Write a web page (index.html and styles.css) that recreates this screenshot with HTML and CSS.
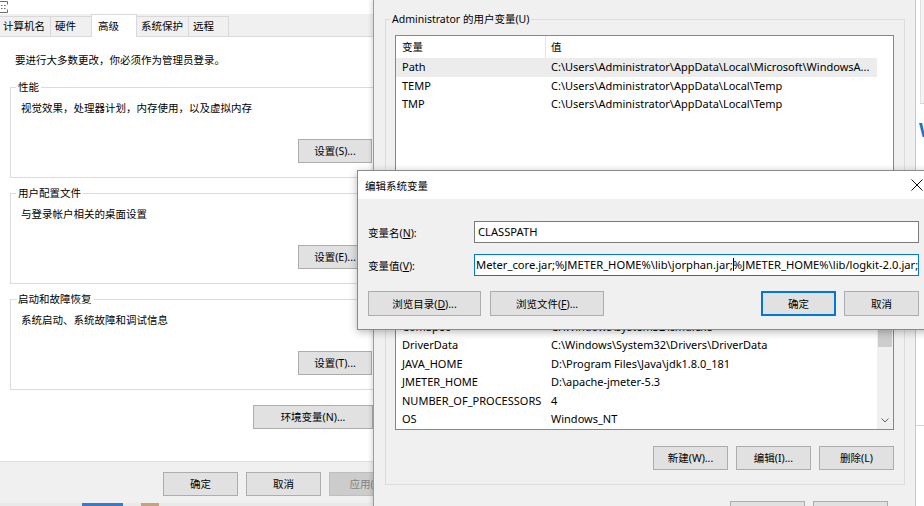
FILE: index.html
```html
<!DOCTYPE html>
<html lang="zh-CN">
<head>
<meta charset="utf-8">
<title>系统属性 - 环境变量</title>
<link rel="stylesheet" href="styles.css">
</head>
<body>
<div class="desk">

  <section class="win sysprops">
    <div class="sheet">
      <div class="caption">
        <svg class="appicon" width="10" height="14" viewBox="0 0 10 14"><path d="M0 1.5h7.5v3M0 12.5h7.5v-3M1 5.5h1.5M4 5.5h1.5M1 8.5h1.5M4 8.5h1.5" fill="none" stroke="#6b6b6b" stroke-width="1"/></svg>
      </div>
      <div class="tabs">
        <div class="tab t1">计算机名</div>
        <div class="tab t2">硬件</div>
        <div class="tab t3 sel">高级</div>
        <div class="tab t4">系统保护</div>
        <div class="tab t5">远程</div>
      </div>
      <div class="page">
        <p class="note">要进行大多数更改，你必须作为管理员登录。</p>
        <fieldset class="grp">
          <legend>性能</legend>
          <p class="desc">视觉效果，处理器计划，内存使用，以及虚拟内存</p>
          <div class="btnrow"><button class="btn">设置(S)...</button></div>
        </fieldset>
        <fieldset class="grp">
          <legend>用户配置文件</legend>
          <p class="desc">与登录帐户相关的桌面设置</p>
          <div class="btnrow"><button class="btn">设置(E)...</button></div>
        </fieldset>
        <fieldset class="grp">
          <legend>启动和故障恢复</legend>
          <p class="desc">系统启动、系统故障和调试信息</p>
          <div class="btnrow"><button class="btn">设置(T)...</button></div>
        </fieldset>
        <div class="envrow"><button class="btn wide">环境变量(N)...</button></div>
      </div>
      <div class="footer">
        <button class="btn">确定</button>
        <button class="btn">取消</button>
        <button class="btn" disabled>应用(A)</button>
      </div>
      <div class="peek"><span class="pk-blue"></span><span class="pk-orange"></span></div>
    </div>
  </section>

  <section class="win envwin">
    <fieldset class="egrp ug">
      <legend>Administrator 的用户变量(U)</legend>
      <div class="lv user">
        <div class="lvmain">
          <div class="lvh"><div class="c1">变量</div><div class="c2">值</div></div>
          <div class="lr sel"><div class="c1">Path</div><div class="c2">C:\Users\Administrator\AppData\Local\Microsoft\WindowsA...</div></div>
          <div class="lr"><div class="c1">TEMP</div><div class="c2">C:\Users\Administrator\AppData\Local\Temp</div></div>
          <div class="lr"><div class="c1">TMP</div><div class="c2">C:\Users\Administrator\AppData\Local\Temp</div></div>
        </div>
      </div>
      <div class="ebtnrow">
        <button class="btn">新建(N)...</button>
        <button class="btn">编辑(E)...</button>
        <button class="btn">删除(D)</button>
      </div>
    </fieldset>
    <fieldset class="egrp sg">
      <legend>系统变量(S)</legend>
      <div class="lv sys">
        <div class="lvmain">
          <div class="lvh"><div class="c1">变量</div><div class="c2">值</div></div>
          <div class="lr"><div class="c1">CLASSPATH</div><div class="c2">.;%JAVA_HOME%\lib\dt.jar;%JAVA_HOME%\lib\tools.jar;</div></div>
          <div class="lr"><div class="c1">ComSpec</div><div class="c2">C:\Windows\system32\cmd.exe</div></div>
          <div class="lr"><div class="c1">DriverData</div><div class="c2">C:\Windows\System32\Drivers\DriverData</div></div>
          <div class="lr"><div class="c1">JAVA_HOME</div><div class="c2">D:\Program Files\Java\jdk1.8.0_181</div></div>
          <div class="lr"><div class="c1">JMETER_HOME</div><div class="c2">D:\apache-jmeter-5.3</div></div>
          <div class="lr"><div class="c1">NUMBER_OF_PROCESSORS</div><div class="c2">4</div></div>
          <div class="lr"><div class="c1">OS</div><div class="c2">Windows_NT</div></div>
        </div>
        <div class="vscroll">
          <div class="sbup"></div>
          <div class="sbtrack"><div class="thumb"></div></div>
          <div class="sbdown"><svg width="8" height="5" viewBox="0 0 8 5"><path d="M0.5 0.5L4 4L7.5 0.5" fill="none" stroke="#606060" stroke-width="1"/></svg></div>
        </div>
      </div>
      <div class="ebtnrow">
        <button class="btn">新建(W)...</button>
        <button class="btn">编辑(I)...</button>
        <button class="btn">删除(L)</button>
      </div>
    </fieldset>
    <div class="ebottom">
      <button class="btn">确定</button>
      <button class="btn">取消</button>
    </div>
  </section>

  <section class="win sliver">
    <div class="sl-top"></div>
    <div class="sl-mark">W</div>
    <div class="sl-mid"></div>
  </section>

  <section class="win editdlg">
    <div class="dlgtitle">
      <span class="dlgname">编辑系统变量</span>
      <span class="close"><svg width="12" height="12" viewBox="0 0 12 12"><path d="M0.5 0.5L11.5 11.5M11.5 0.5L0.5 11.5" stroke="#111" stroke-width="1"/></svg></span>
    </div>
    <div class="dlgbody">
      <div class="frow">
        <label class="flabel">变量名(<u>N</u>):</label>
        <div class="field">CLASSPATH</div>
      </div>
      <div class="frow">
        <label class="flabel">变量值(<u>V</u>):</label>
        <div class="field focus">Meter_core.jar;%JMETER_HOME%\lib\jorphan.jar;<span class="caret"></span>%JMETER_HOME%\lib/logkit-2.0.jar;</div>
      </div>
      <div class="dbtnrow">
        <button class="btn b1">浏览目录(<u>D</u>)...</button>
        <button class="btn b2">浏览文件(<u>F</u>)...</button>
        <button class="btn def">确定</button>
        <button class="btn">取消</button>
      </div>
    </div>
  </section>

</div>
</body>
</html>
```

FILE: styles.css
```css
* { box-sizing: border-box; }
html, body { margin: 0; padding: 0; }
body {
  font-family: "Noto Sans", "Noto Sans CJK SC", sans-serif;
  font-size: 10.5px;
  color: #000;
  background: #f0f0f0;
}
.desk {
  position: relative;
  width: 924px;
  height: 506px;
  overflow: hidden;
  background: #f0f0f0;
}
.win { position: absolute; }

/* ---------- buttons ---------- */
.btn {
  font: inherit;
  color: #000;
  height: 24px;
  width: 74px;
  padding: 0;
  border: 1px solid #adadad;
  background: #e1e1e1;
  line-height: 22px;
  text-align: center;
  white-space: nowrap;
}
.btn:disabled {
  background: #cccccc;
  border-color: #bfbfbf;
  color: #838383;
}
.btn u { text-decoration: underline; }

/* ---------- system properties window ---------- */
.sysprops {
  left: 0;
  top: 0;
  width: 373px;
  height: 506px;
  overflow: hidden;
  background: #f0f0f0;
}
.sheet {
  width: 414px;
  height: 506px;
  display: flex;
  flex-direction: column;
}
.caption {
  height: 14px;
  flex: none;
  background: #fff;
  display: flex;
}
.appicon { display: block; }
.tabs {
  flex: none;
  height: 23px;
  display: flex;
  align-items: flex-end;
  background: #f0f0f0;
  border-bottom: 1px solid #d9d9d9;
}
.tab {
  height: 20px;
  line-height: 19px;
  border: 1px solid #d9d9d9;
  border-bottom: none;
  background: #f0f0f0;
  padding-left: 4px;
  margin-left: -1px;
  white-space: nowrap;
}
.t1 { margin-left: -2px; width: 53px; }
.t2 { width: 42px; }
.t3 { width: 46px; padding-left: 6px; }
.t4 { width: 53px; }
.t5 { width: 41px; }
.tab.sel {
  height: 23px;
  padding-top: 2px;
  background: #fff;
  margin-bottom: -1px;
  position: relative;
  z-index: 1;
}
.page {
  flex: 1;
  background: #fff;
  padding: 16px 0 0 10px;
}
.note {
  margin: 0 0 0 5px;
  line-height: 14px;
  height: 14px;
}
.grp {
  width: 372px;
  margin: 13px 0 0 0;
  border: 1px solid #dcdcdc;
  padding: 7px 9px 14px 10px;
  min-width: 0;
}
.grp + .grp { margin-top: 8px; }
.grp legend {
  padding: 0 2px;
  margin-left: -5px;
  line-height: 14px;
}
.desc {
  margin: 0;
  line-height: 14px;
}
.btnrow {
  display: flex;
  justify-content: flex-end;
  margin-top: 24px;
}
.envrow {
  width: 363px;
  display: flex;
  justify-content: flex-end;
  margin-top: 15px;
}
.btn.wide { width: 120px; }
.footer {
  flex: none;
  height: 42px;
  border-top: 1px solid #dfdfdf;
  background: #f0f0f0;
  display: flex;
  justify-content: flex-end;
  align-items: flex-start;
  gap: 8px;
  padding: 10px 10px 0 0;
}
.footer .btn { width: 75px; }
.peek {
  flex: none;
  height: 3px;
  background: #e9e9e9;
  display: flex;
}
.pk-blue { width: 41px; margin-left: 82px; background: #3a78c8; }
.pk-orange { width: 18px; margin-left: 18px; background: #c9a27a; }

/* ---------- environment variables window ---------- */
.envwin {
  left: 373px;
  top: 0;
  width: 543px;
  height: 506px;
  background: #f0f0f0;
  border-left: 1px solid #9c9c9c;
  border-right: 1px solid #c8c8c8;
  box-shadow: -2px 0 4px rgba(0, 0, 0, 0.12);
  padding: 12px 0 0 11px;
}
.egrp {
  width: 520px;
  margin: 0;
  border: 1px solid #dcdcdc;
  padding: 9px 10px 14px 9px;
  min-width: 0;
}
.egrp legend {
  padding: 0 2px;
  margin-left: -5px;
  line-height: 14px;
}
.egrp.sg { margin-top: 3px; }
.lv {
  border: 1px solid #828790;
  background: #fff;
  display: flex;
  overflow: hidden;
}
.lv.user { height: 160px; }
.lv.sys { height: 153.5px; }
.lvmain { flex: 1; min-width: 0; }
.lvh {
  display: flex;
  height: 22px;
  line-height: 22px;
  width: 481px;
}
.lvh .c2 { border-left: 1px solid #e5e5e5; }
.lr {
  display: flex;
  height: 18.5px;
  line-height: 18.5px;
  width: 481px;
  font-size: 11px;
}
.lr.sel { background: #ececec; }
.c1 {
  width: 149px;
  flex: none;
  padding-left: 6px;
  white-space: nowrap;
  overflow: hidden;
}
.c2 {
  flex: 1;
  padding-left: 6px;
  white-space: nowrap;
  overflow: hidden;
}
.lvh .c2 { padding-left: 5px; }
.vscroll {
  width: 16px;
  flex: none;
  background: #f0f0f0;
  display: flex;
  flex-direction: column;
}
.sbup { height: 17px; flex: none; }
.sbtrack { flex: 1; padding: 0 1px; }
.thumb {
  margin-top: 36px;
  height: 17px;
  background: #cdcdcd;
}
.sbdown {
  height: 17px;
  flex: none;
  display: flex;
  align-items: center;
  justify-content: center;
}
.sbdown svg { display: block; }
.ebtnrow {
  display: flex;
  justify-content: flex-end;
  gap: 8px;
  margin-top: 16px;
}
.ebtnrow .btn { width: 75px; }
.ebottom {
  width: 520px;
  display: flex;
  justify-content: flex-end;
  gap: 8px;
  padding-right: 17px;
  margin-top: 16px;
}
.ebottom .btn { width: 75px; }

/* ---------- sliver of a window at the right ---------- */
.sliver {
  left: 916px;
  top: 0;
  width: 8px;
  height: 506px;
  background: #fff;
  display: flex;
  flex-direction: column;
}
.sl-top {
  height: 104px;
  flex: none;
  background: #f3f3f3;
  border-left: 1px solid #e0e0e0;
  border-bottom: 1px solid #d4d4d4;
  margin-left: 4px;
}
.sl-mark {
  margin-top: 16px;
  padding-left: 3px;
  font-family: "Liberation Sans", sans-serif;
  font-weight: bold;
  font-size: 20px;
  line-height: 20px;
  color: #1f6fc5;
  white-space: nowrap;
}
.sl-mid {
  margin-top: 285px;
  height: 1px;
  background: #d4d4d4;
}

/* ---------- edit system variable dialog ---------- */
.editdlg {
  left: 357px;
  top: 170px;
  width: 583px;
  height: 160px;
  border: 1px solid #8a8a8a;
  background: #f0f0f0;
  box-shadow: 0 2px 8px rgba(0, 0, 0, 0.28);
  display: flex;
  flex-direction: column;
}
.dlgtitle {
  height: 28px;
  flex: none;
  background: #fff;
  display: flex;
  align-items: center;
  padding-left: 7px;
}
.dlgname { flex: 1; }
.close {
  width: 44px;
  height: 28px;
  display: flex;
  align-items: center;
  justify-content: center;
}
.close svg { display: block; }
.dlgbody {
  flex: 1;
  padding: 22px 20px 0 10px;
}
.frow {
  display: flex;
  align-items: center;
}
.frow + .frow { margin-top: 11px; }
.flabel { width: 106px; flex: none; }
.field {
  flex: 1;
  height: 22px;
  line-height: 20px;
  border: 1px solid #7a7a7a;
  background: #fff;
  padding-left: 3px;
  white-space: nowrap;
  overflow: hidden;
  font-size: 11.2px;
}
.field.focus {
  border-color: #0078d7;
  padding-left: 1px;
}
.caret {
  display: inline-block;
  width: 0;
  height: 13px;
  border-left: 1px solid #000;
  vertical-align: -2px;
  margin-right: -1px;
}
.dbtnrow {
  display: flex;
  margin-top: 15px;
}
.dbtnrow .btn { height: 25px; width: 75px; }
.dbtnrow .b1 { width: 113px; }
.dbtnrow .b2 { width: 114px; margin-left: 9px; }
.dbtnrow .def {
  margin-left: auto;
  margin-right: 8px;
  border: 2px solid #0078d7;
}
```
